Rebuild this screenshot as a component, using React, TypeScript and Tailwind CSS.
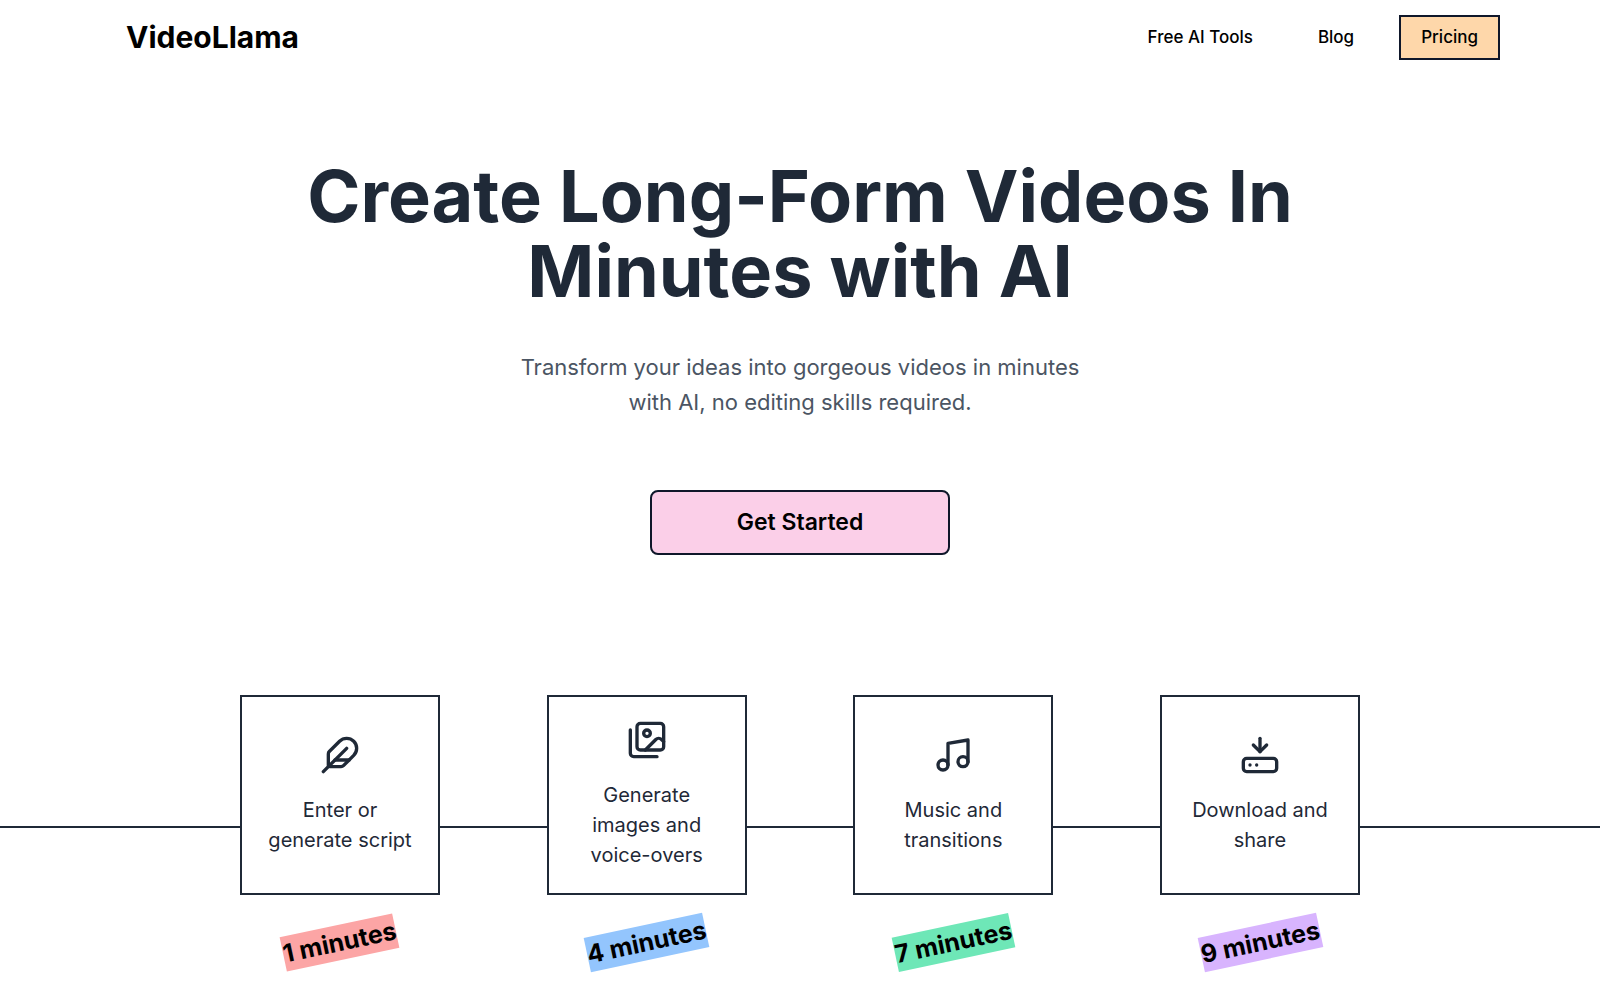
import React from "react";
import { Feather, HardDriveDownload, Music } from "lucide-react";

interface IconProps {
  size?: number;
}

interface Step {
  icon: React.ComponentType<IconProps>;
  text: string;
  time: string;
  color: string;
}

const ImagesIcon: React.FC<IconProps> = ({ size = 24 }) => (
  <svg
    width={size}
    height={size}
    viewBox="0 0 24 24"
    fill="none"
    stroke="currentColor"
    strokeWidth="2"
    strokeLinecap="round"
    strokeLinejoin="round"
    aria-hidden="true"
  >
    <path d="M18 22H4a2 2 0 0 1-2-2V6" />
    <path d="m22 13-1.296-1.296a2.41 2.41 0 0 0-3.408 0L11 18" />
    <circle cx="12" cy="8" r="2" />
    <rect width="16" height="16" x="6" y="2" rx="2" />
  </svg>
);

const steps: Step[] = [
  { icon: Feather, text: "Enter or generate script", time: "1 minutes", color: "bg-[#fca5a5]" },
  { icon: ImagesIcon, text: "Generate images and voice-overs", time: "4 minutes", color: "bg-[#93c5fd]" },
  { icon: Music, text: "Music and transitions", time: "7 minutes", color: "bg-[#6ee7b7]" },
  { icon: HardDriveDownload, text: "Download and share", time: "9 minutes", color: "bg-[#d8b4fe]" }
];

const Header: React.FC = () => (
  <header className="flex items-center justify-between h-[75px] pl-[126px] pr-[100px]">
    <a href="#" className="text-[30px] font-bold text-black">VideoLlama</a>
    <nav className="flex items-center text-[17px] font-medium text-black">
      <a href="#" className="mr-[65px]">Free AI Tools</a>
      <a href="#" className="mr-[45px]">Blog</a>
      <a href="#" className="flex items-center h-[45px] px-5 border-2 border-[#0f172a] bg-[#fed7aa]">Pricing</a>
    </nav>
  </header>
);

const Hero: React.FC = () => (
  <section className="flex flex-col items-center text-center pt-[83px]">
    <h1 className="max-w-[1100px] text-[72px] leading-[75px] font-bold text-[#1f2937]">
      Create Long-Form Videos In Minutes with AI
    </h1>
    <p className="mt-[42px] max-w-[600px] text-[22px] leading-[35px] text-[#4b5563]">
      Transform your ideas into gorgeous videos in minutes with AI, no editing skills required.
    </p>
    <button
      type="button"
      className="mt-[70px] w-[300px] h-[65px] rounded-lg border-2 border-[#0f172a] bg-[#fbcfe8] text-[23px] font-semibold text-black"
    >
      Get Started
    </button>
  </section>
);

const StepCard: React.FC<{ step: Step }> = ({ step }) => {
  const Icon = step.icon;

  return (
    <li className="flex flex-col items-center">
      <div className="relative flex flex-col items-center justify-center gap-5 size-[200px] px-6 border-2 border-[#1f2937] bg-white">
        <Icon size={40} />
        <p className="text-[20px] leading-[30px] text-center">{step.text}</p>
      </div>
      <span className={`mt-[30px] -rotate-12 text-[25px] leading-[35px] font-bold text-black whitespace-nowrap ${step.color}`}>
        {step.time}
      </span>
    </li>
  );
};

const Steps: React.FC = () => (
  <section className="relative mt-[140px] px-5 pb-10 text-[#1f2937]">
    {/* Timeline running behind the cards */}
    <div className="absolute inset-x-0 top-[131px] h-[2px] bg-[#1f2937]" />
    <ol className="flex justify-between max-w-[1120px] mx-auto">
      {steps.map(step => (
        <StepCard key={step.time} step={step} />
      ))}
    </ol>
  </section>
);

const App: React.FC = () => (
  <div className="min-h-screen bg-white overflow-hidden font-['Inter',sans-serif]">
    <Header />
    <main>
      <Hero />
      <Steps />
    </main>
  </div>
);

export default App;
